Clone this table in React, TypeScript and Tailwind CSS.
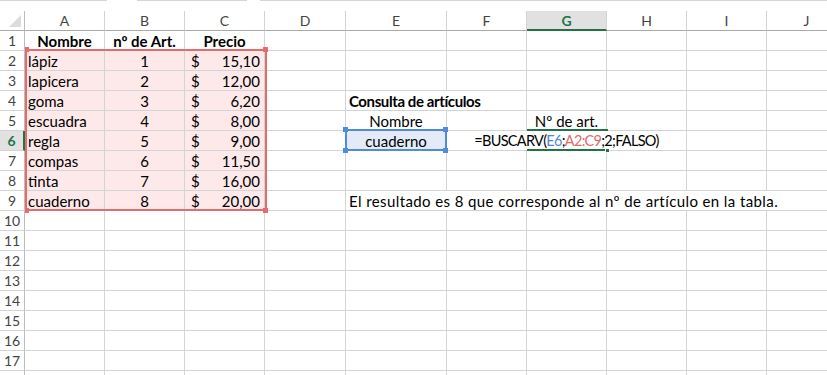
import type { ReactNode } from 'react';
import clsx from 'clsx';

type Item = {
  name: string;
  art: number;
  price: string;
};

const items: Item[] = [
  { name: 'lápiz', art: 1, price: '15,10' },
  { name: 'lapicera', art: 2, price: '12,00' },
  { name: 'goma', art: 3, price: '6,20' },
  { name: 'escuadra', art: 4, price: '8,00' },
  { name: 'regla', art: 5, price: '9,00' },
  { name: 'compas', art: 6, price: '11,50' },
  { name: 'tinta', art: 7, price: '16,00' },
  { name: 'cuaderno', art: 8, price: '20,00' },
];

const COLUMNS = ['A', 'B', 'C', 'D', 'E', 'F', 'G', 'H', 'I', 'J'];
const GRID = 'grid grid-cols-[25px_80px_80px_80px_81px_101px_80px_80px_80px_80px_80px]';
const ACTIVE_COL = 'G';
const ACTIVE_ROW = 6;
const LAST_ROW = 17;

function Cell({ className, children }: { className?: string; children?: ReactNode }) {
  return (
    <div
      className={clsx(
        'h-[20px] overflow-visible whitespace-nowrap border-b border-r border-[#d4d4d4] px-[3px] pt-px leading-[18px]',
        className,
      )}
    >
      {children}
    </div>
  );
}

function TableCell({ className, children }: { className?: string; children?: ReactNode }) {
  return (
    <Cell className={clsx('border-[#a3c162] bg-[#fde9e9]', className)}>{children}</Cell>
  );
}

function RowHead({ n }: { n: number }) {
  const active = n === ACTIVE_ROW;
  return (
    <div
      className={clsx(
        'h-[20px] border-b border-[#d4d4d4] pt-px text-center text-[14px] leading-[18px]',
        active
          ? 'border-r-2 border-r-[#217346] bg-[#e1e1e1] font-bold text-[#217346]'
          : 'border-r border-r-[#bdbdbd] text-[#444]',
      )}
    >
      {n <= LAST_ROW ? n : null}
    </div>
  );
}

function Empty({ count }: { count: number }) {
  return (
    <>
      {Array.from({ length: count }, (_, i) => (
        <Cell key={i} />
      ))}
    </>
  );
}

// columns E..J, depending on the row
function LookupPart({ n }: { n: number }) {
  if (n === 4) {
    return (
      <>
        <Cell className="col-span-2 font-bold tracking-[-0.4px]">Consulta de artículos</Cell>
        <Empty count={4} />
      </>
    );
  }
  if (n === 5) {
    return (
      <>
        <Cell className="text-center">Nombre</Cell>
        <Cell />
        <Cell className="text-center">Nº de art.</Cell>
        <Empty count={3} />
      </>
    );
  }
  if (n === 6) {
    return (
      <>
        <Cell className="bg-[#e4ebf7] text-center">cuaderno</Cell>
        <Cell className="col-span-3 text-center text-[14.5px] tracking-[-0.7px]">
          =BUSCARV(<span className="text-[#4f86d9]">E6</span>;
          <span className="text-[#e46a6a]">A2:C9</span>;2;FALSO)
        </Cell>
        <Empty count={2} />
      </>
    );
  }
  if (n === 9) {
    return (
      <Cell className="col-span-6 tracking-[0.4px]">
        El resultado es 8 que corresponde al nº de artículo en la tabla.
      </Cell>
    );
  }
  return <Empty count={6} />;
}

function SheetRow({ n }: { n: number }) {
  const item = n >= 2 && n <= 9 ? items[n - 2] : null;

  return (
    <div className={GRID}>
      <RowHead n={n} />
      {n === 1 ? (
        <>
          <Cell className="text-center font-bold">Nombre</Cell>
          <Cell className="text-center font-bold">nº de Art.</Cell>
          <Cell className="text-center font-bold">Precio</Cell>
        </>
      ) : item ? (
        <>
          <TableCell>{item.name}</TableCell>
          <TableCell className="text-center">{item.art}</TableCell>
          <TableCell className="flex justify-between pl-[6px] pr-[4px]">
            <span>$</span>
            <span>{item.price}</span>
          </TableCell>
        </>
      ) : (
        <Empty count={3} />
      )}
      <Cell />
      {n <= 9 ? <LookupPart n={n} /> : <Empty count={6} />}
    </div>
  );
}

export default function App() {
  const rows = Array.from({ length: LAST_ROW + 1 }, (_, i) => i + 1);

  return (
    <div className="relative h-[375px] w-[827px] overflow-hidden bg-white font-['Lato',sans-serif] text-[15px] text-black">
      {/* remains of the formula bar above the sheet */}
      <div className="flex h-[11px] items-start">
        <div className="h-px w-[107px] bg-[#d6d6d6]" />
        <div className="ml-[30px] h-px w-[110px] bg-[#d6d6d6]" />
        <div className="ml-[13px] h-px flex-1 bg-[#d6d6d6]" />
      </div>

      {/* column headers */}
      <div className={GRID}>
        <div className="relative h-[20px] border-b border-r border-[#ababab] border-r-[#bdbdbd]">
          <svg className="absolute left-[9px] top-[4px]" width="13" height="13" viewBox="0 0 13 13">
            <polygon points="0,12 12,12 12,0" fill="#dcdcdc" />
          </svg>
        </div>
        {COLUMNS.map((col) => (
          <div
            key={col}
            className={clsx(
              'h-[20px] border-r border-r-[#d4d4d4] text-center text-[14px] leading-[19px]',
              col === ACTIVE_COL
                ? 'border-b-2 border-b-[#217346] bg-[#e1e1e1] font-bold text-[#217346]'
                : 'border-b border-b-[#ababab] text-[#444]',
            )}
          >
            {col}
          </div>
        ))}
      </div>

      {rows.map((n) => (
        <SheetRow key={n} n={n} />
      ))}

      {/* range A2:C9 referenced by the formula */}
      <div className="absolute left-[25px] top-[49px] h-[162px] w-[242px] border-2 border-[#e46c6c]" />
      <div className="absolute left-[25px] top-[47px] h-[5px] w-[4px] bg-[#e46c6c]" />
      <div className="absolute left-[263px] top-[47px] h-[5px] w-[5px] bg-[#e46c6c]" />
      <div className="absolute left-[25px] top-[208px] h-[5px] w-[4px] bg-[#e46c6c]" />
      <div className="absolute left-[263px] top-[208px] h-[5px] w-[5px] bg-[#e46c6c]" />

      {/* lookup value E6 */}
      <div className="absolute left-[345px] top-[129px] h-[22px] w-[102px] border-2 border-[#4f8bdb]" />
      <div className="absolute left-[343px] top-[127px] h-[5px] w-[5px] bg-[#4f8bdb]" />
      <div className="absolute left-[443px] top-[127px] h-[5px] w-[5px] bg-[#4f8bdb]" />
      <div className="absolute left-[343px] top-[148px] h-[5px] w-[5px] bg-[#4f8bdb]" />
      <div className="absolute left-[443px] top-[148px] h-[5px] w-[5px] bg-[#4f8bdb]" />

      {/* active cell G6 */}
      <div className="absolute left-[527px] top-[129px] h-[2px] w-[81px] bg-[#217346]" />
      <div className="absolute left-[527px] top-[149px] h-[2px] w-[80px] bg-[#217346]" />
      <div className="absolute left-[605px] top-[148px] h-[5px] w-[5px] border border-white bg-[#217346]" />
    </div>
  );
}
